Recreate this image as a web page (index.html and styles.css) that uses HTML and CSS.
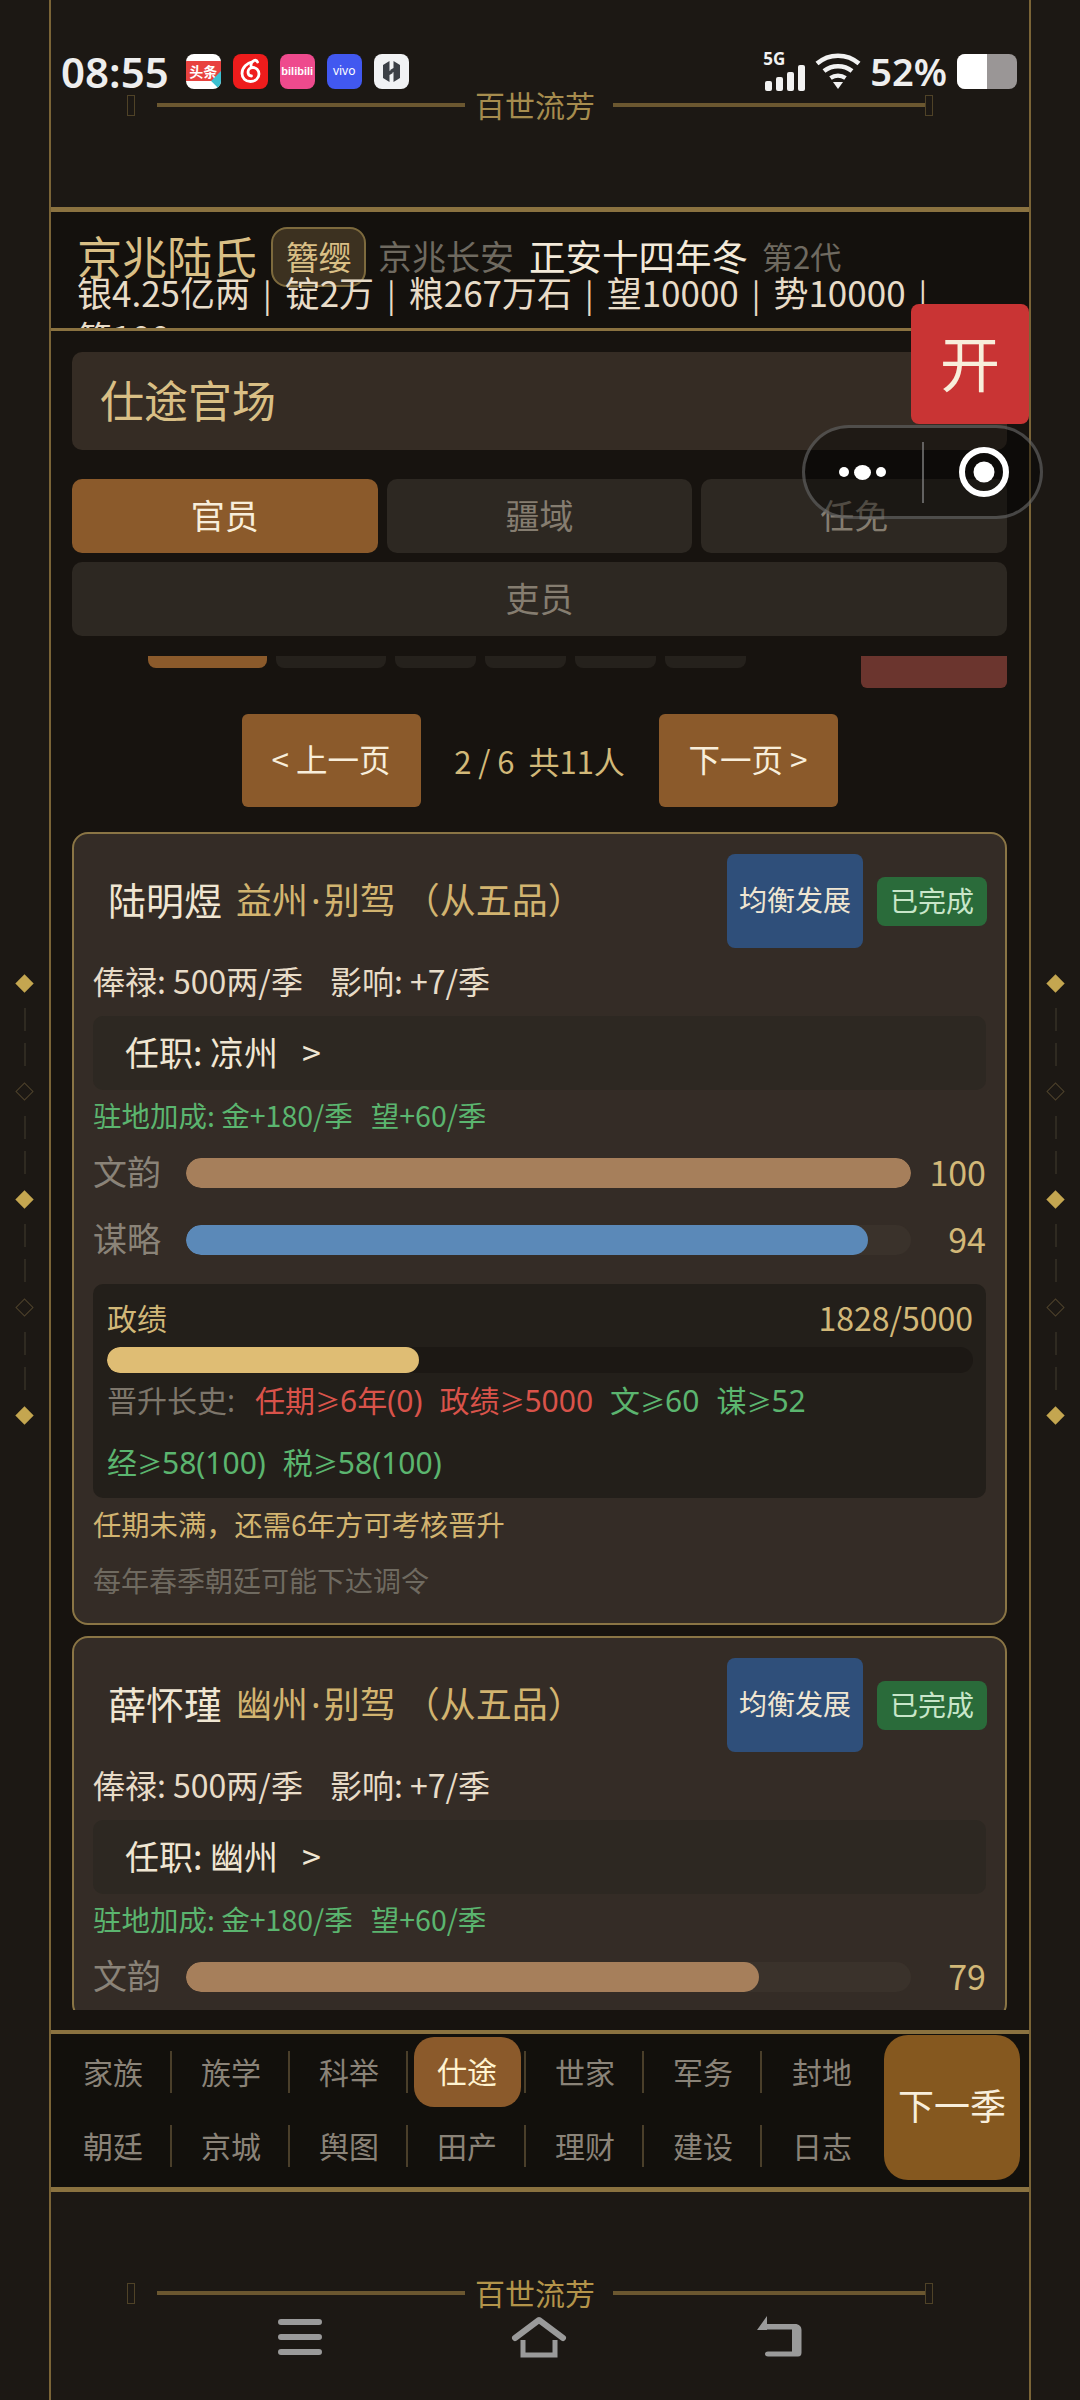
FILE: index.html
```html
<!DOCTYPE html>
<html lang="zh-CN">
<head>
    <meta charset="UTF-8">
    <meta name="viewport" content="width=device-width, initial-scale=1.0">
    <title>百世流芳</title>
    <link rel="stylesheet" href="styles.css">
</head>
<body>
<div class="page">
    <div class="gutter">
        <i class="gem"></i><i class="dash"></i><i class="dash"></i>
        <i class="gem hollow"></i><i class="dash"></i><i class="dash"></i>
        <i class="gem"></i><i class="dash"></i><i class="dash"></i>
        <i class="gem hollow"></i><i class="dash"></i><i class="dash"></i>
        <i class="gem"></i>
    </div>

    <div class="frame">
        <div class="top-space">
            <div class="motto"><i class="post"></i><i class="rule first"></i><span>百世流芳</span><i class="rule last"></i><i class="post"></i></div>
        </div>

        <header class="family">
            <div class="family-row">
                <span class="family-name">京兆陆氏</span>
                <span class="family-rank">簪缨</span>
                <span class="family-place">京兆长安</span>
                <span class="family-date">正安十四年冬</span>
                <span class="family-gen">第2代</span>
            </div>
            <div class="family-stats">
                银4.25亿两<i class="sep">|</i>锭2万<i class="sep">|</i>粮267万石<i class="sep">|</i>望10000<i class="sep">|</i>势10000<i class="sep">|</i><br>筹100
            </div>
        </header>

        <main class="content">
            <div class="page-title">仕途官场</div>
            <div class="tabs">
                <div class="tab active">官员</div>
                <div class="tab">疆域</div>
                <div class="tab">任免</div>
                <div class="tab wide">吏员</div>
            </div>

            <div class="scroller">
                <div class="filters">
                    <i class="chip on"></i><i class="chip w110"></i><i class="chip"></i><i class="chip"></i><i class="chip"></i><i class="chip"></i>
                    <i class="chip-red"></i>
                </div>

                <div class="pager">
                    <div class="pager-btn">&lt; 上一页</div>
                    <div class="pager-info">2 / 6&nbsp;&nbsp;共11人</div>
                    <div class="pager-btn">下一页 &gt;</div>
                </div>

                <section class="card">
                    <div class="card-head">
                        <span class="person">陆明煜</span>
                        <span class="post-name">益州<span class="dot">·</span>别驾<span class="post-grade">（从五品）</span></span>
                        <span class="badge-blue">均衡发展</span>
                        <span class="badge-green">已完成</span>
                    </div>
                    <div class="pay"><span>俸禄: 500两/季</span><span>影响: +7/季</span></div>
                    <div class="assign"><span>任职: 凉州</span><span class="assign-arrow">&gt;</span></div>
                    <div class="bonus"><span>驻地加成: 金+180/季</span><span>望+60/季</span></div>
                    <div class="stat first">
                        <span class="stat-label">文韵</span>
                        <div class="bar"><div class="bar-fill tan" style="width: 100%"></div></div>
                        <span class="stat-num">100</span>
                    </div>
                    <div class="stat">
                        <span class="stat-label">谋略</span>
                        <div class="bar"><div class="bar-fill blue" style="width: 94%"></div></div>
                        <span class="stat-num">94</span>
                    </div>
                    <div class="merit">
                        <div class="merit-head"><span>政绩</span><span class="merit-num">1828/5000</span></div>
                        <div class="merit-bar"><div class="merit-fill" style="width: 36%"></div></div>
                        <div class="reqs">
                            <span class="req-label">晋升长史:</span>
                            <span class="bad">任期<span class="ge">≥</span>6年(0)</span>
                            <span class="bad">政绩<span class="ge">≥</span>5000</span>
                            <span class="good">文<span class="ge">≥</span>60</span>
                            <span class="good">谋<span class="ge">≥</span>52</span>
                            <span class="good">经<span class="ge">≥</span>58(100)</span>
                            <span class="good">税<span class="ge">≥</span>58(100)</span>
                        </div>
                    </div>
                    <div class="note">任期未满，还需6年方可考核晋升</div>
                    <div class="tip">每年春季朝廷可能下达调令</div>
                </section>

                <section class="card">
                    <div class="card-head">
                        <span class="person">薛怀瑾</span>
                        <span class="post-name">幽州<span class="dot">·</span>别驾<span class="post-grade">（从五品）</span></span>
                        <span class="badge-blue">均衡发展</span>
                        <span class="badge-green">已完成</span>
                    </div>
                    <div class="pay"><span>俸禄: 500两/季</span><span>影响: +7/季</span></div>
                    <div class="assign"><span>任职: 幽州</span><span class="assign-arrow">&gt;</span></div>
                    <div class="bonus"><span>驻地加成: 金+180/季</span><span>望+60/季</span></div>
                    <div class="stat first">
                        <span class="stat-label">文韵</span>
                        <div class="bar"><div class="bar-fill tan" style="width: 79%"></div></div>
                        <span class="stat-num">79</span>
                    </div>
                </section>
            </div>
        </main>

        <nav class="nav">
            <div class="nav-grid">
                <div class="nav-item"><span>家族</span></div>
                <div class="nav-item"><span>族学</span></div>
                <div class="nav-item"><span>科举</span></div>
                <div class="nav-item current"><span>仕途</span></div>
                <div class="nav-item"><span>世家</span></div>
                <div class="nav-item"><span>军务</span></div>
                <div class="nav-item end"><span>封地</span></div>
                <div class="nav-item"><span>朝廷</span></div>
                <div class="nav-item"><span>京城</span></div>
                <div class="nav-item"><span>舆图</span></div>
                <div class="nav-item"><span>田产</span></div>
                <div class="nav-item"><span>理财</span></div>
                <div class="nav-item"><span>建设</span></div>
                <div class="nav-item end"><span>日志</span></div>
            </div>
            <div class="next-season">下一季</div>
        </nav>

        <div class="bottom-space">
            <div class="motto bright"><i class="post"></i><i class="rule first"></i><span>百世流芳</span><i class="rule last"></i><i class="post"></i></div>
        </div>
    </div>

    <div class="gutter">
        <i class="gem"></i><i class="dash"></i><i class="dash"></i>
        <i class="gem hollow"></i><i class="dash"></i><i class="dash"></i>
        <i class="gem"></i><i class="dash"></i><i class="dash"></i>
        <i class="gem hollow"></i><i class="dash"></i><i class="dash"></i>
        <i class="gem"></i>
    </div>

    <!-- system status bar, lies over the page -->
    <div class="status">
        <span class="clock">08:55</span>
        <div class="apps">
            <div class="app toutiao"><span class="tt-band">头条</span><i class="tt-corner"></i></div>
            <div class="app netease">
                <svg width="35" height="35" viewBox="0 0 35 35"><path d="M20 7.500c-6 1.500-11 6-11 12 0 4.500 3.500 8 8.500 8s8.500-3.500 8.500-7.500-3-6.500-6-6.500-5 2-5 4.500 1.500 4 3.500 4M18.500 13.500c-1-2-.5-6 2.500-7 1.500-.5 3 .2 3.500 1.500" fill="none" stroke="#fff" stroke-width="2.800" stroke-linecap="round"/></svg>
            </div>
            <div class="app bili">bilibili</div>
            <div class="app vivo">vivo</div>
            <div class="app hex">
                <svg width="35" height="35" viewBox="0 0 35 35"><path d="M15.500 7 9 11v13l6.500 4v-7l3-1.700v-4l-3 1.700zM19.500 28l6.500-4V11l-6.500-4v7l-3 1.700v4l3-1.700z" fill="#3c4046"/></svg>
            </div>
        </div>
        <div class="sys">
            <div class="signal">
                <span class="five-g">5G</span>
                <div class="signal-bars"><i class="s1"></i><i class="s2"></i><i class="s3"></i><i class="s4"></i></div>
            </div>
            <svg class="wifi" width="46" height="36" viewBox="0 0 46 36"><path d="M2 10.500c12-10.500 30-10.500 42 0M9 18c8-6.500 20-6.500 28 0M15.500 25c4.500-3 10.500-3 15 0" fill="none" stroke="#f2f2f2" stroke-width="4.500"/><path d="M18 29h10l-5 7z" fill="#f2f2f2"/></svg>
            <span class="percent">52%</span>
            <div class="battery"><div class="battery-level"></div></div>
        </div>
    </div>

    <div class="float-open">开</div>

    <div class="capsule">
        <div class="capsule-dots"><i></i><i class="mid"></i><i></i></div>
        <i class="capsule-sep"></i>
        <svg width="50" height="50" viewBox="0 0 50 50"><circle cx="25" cy="25" r="22" fill="none" stroke="#fff" stroke-width="6"/><circle cx="25" cy="25" r="10.500" fill="#fff"/></svg>
    </div>

    <!-- android buttons, drawn on top of the bottom strip -->
    <div class="sys-nav">
        <svg width="44" height="42" viewBox="0 0 44 42"><path d="M3 6h38M3 21h38M3 36h38" stroke="#9a9a9a" stroke-width="6" stroke-linecap="round"/></svg>
        <svg width="56" height="42" viewBox="0 0 56 42"><path d="M4 22 28 4l24 18" fill="none" stroke="#9a9a9a" stroke-width="6" stroke-linecap="round" stroke-linejoin="round"/><path d="M12 24v15h32V24" fill="none" stroke="#9a9a9a" stroke-width="5"/></svg>
        <svg width="48" height="42" viewBox="0 0 48 42"><path d="M1 14 11 0v8h28c4 0 6.500 2.500 6.500 6v22.500c0 2.500-1 4-3.500 4H12c-2 0-3-1-3-2.500s1-2.500 3-2.500h24V13.500H11V14z" fill="#9a9a9a"/></svg>
    </div>
</div>
</body>
</html>
```
FILE: styles.css
```css
* {
    box-sizing: border-box;
}
body {
    margin: 0;
    background-color: #1c1814;
    font-family: "Noto Sans CJK SC", "Noto Sans", sans-serif;
    color: #e8dcc8;
}
i {
    font-style: normal;
}
.page {
    position: relative;
    display: flex;
    width: 1080px;
    height: 2400px;
    overflow: hidden;
}

/* side ornaments */
.gutter {
    width: 49px;
    display: flex;
    flex-direction: column;
    align-items: center;
    justify-content: center;
    gap: 12px;
    padding-bottom: 2px;
}
.gem {
    width: 13px;
    height: 13px;
    margin: 6.5px 0;
    transform: rotate(45deg);
    background-color: #c4a650;
}
.gem.hollow {
    background: none;
    border: 1px solid #4d412b;
}
.dash {
    width: 2px;
    height: 23px;
    background-color: #2f2a21;
}

/* frame */
.frame {
    width: 982px;
    display: flex;
    flex-direction: column;
    border-left: 2px solid #7a6437;
    border-right: 2px solid #7a6437;
}
.top-space {
    height: 207px;
    padding-top: 90px;
}
.bottom-space {
    flex: 1;
    padding-top: 86px;
}
.motto {
    display: flex;
    align-items: center;
    margin: 0 97px 0 76px;
    height: 30px;
    font-size: 30px;
    line-height: 28px;
    white-space: nowrap;
    color: #a68c4e;
}
.motto span {
    height: 30px;
}
.motto.bright {
    color: #b3944a;
}
.post {
    flex: none;
    width: 8px;
    height: 21px;
    border: 1px solid #4f4227;
}
.rule {
    flex: none;
    height: 4px;
    background-color: #6b5730;
}
.rule.first {
    width: 308px;
    margin: 0 10px 0 22px;
}
.rule.last {
    width: 312px;
    margin-left: 18px;
}

/* family header */
.family {
    height: 124px;
    padding: 28px 24px 0 26px;
    border-top: 5px solid #8a7240;
    border-bottom: 3px solid #8a7240;
    background-color: #14110d;
    overflow: hidden;
}
.family-row {
    display: flex;
    align-items: center;
    height: 30px;
    white-space: nowrap;
}
.family-name {
    font-size: 45px;
    color: #d9bf85;
}
.family-rank {
    width: 95px;
    height: 60px;
    margin: 4px 12px 0 14px;
    border: 2px solid #7d6a3d;
    border-radius: 16px;
    background-color: #3c3120;
    font-size: 33px;
    line-height: 54px;
    text-align: center;
    color: #d9bf85;
}
.family-place {
    font-size: 34px;
    color: #6f6a60;
}
.family-date {
    margin-left: 15px;
    font-size: 36.5px;
    color: #f3ead9;
}
.family-gen {
    margin-left: 14px;
    font-size: 31px;
    color: #6f6a60;
}
.family-stats {
    font-size: 35px;
    line-height: 43px;
    color: #e8dcc8;
    white-space: nowrap;
}
.sep {
    margin: 0 13px;
    font-size: 32px;
}

/* main column */
.content {
    height: 1699px;
    padding: 21px 22px 20px 21px;
    background-color: #17130f;
    display: flex;
    flex-direction: column;
}
.page-title {
    flex: none;
    height: 98px;
    padding-left: 28px;
    border-radius: 10px;
    background-color: #352c24;
    font-size: 44px;
    line-height: 94px;
    color: #d9bf85;
}
.tabs {
    flex: none;
    display: grid;
    grid-template-columns: repeat(3, 1fr);
    gap: 9px;
    margin-top: 29px;
}
.tab {
    height: 74px;
    border-radius: 10px;
    background-color: #2d2822;
    font-size: 34px;
    line-height: 71px;
    text-align: center;
    color: #857d70;
}
.tab.active {
    background-color: #8b5a2b;
    color: #f8eedb;
}
.tab.wide {
    grid-column: 1 / 4;
}
.scroller {
    flex: 1;
    min-height: 0;
    margin-top: 20px;
    overflow: hidden;
}

/* filter row, scrolled mostly out of view */
.filters {
    display: flex;
    align-items: flex-start;
    gap: 9px;
    height: 32px;
    padding-left: 76px;
}
.chip {
    width: 81px;
    height: 12px;
    border-radius: 0 0 8px 8px;
    background-color: #25211c;
}
.chip.on {
    width: 119px;
    background-color: #8b5a2b;
}
.chip.w110 {
    width: 110px;
}
.chip-red {
    width: 146px;
    height: 32px;
    margin-left: auto;
    border-radius: 0 0 6px 6px;
    background-color: #6b352e;
}

.pager {
    display: flex;
    align-items: center;
    justify-content: center;
    margin-top: 26px;
}
.pager-btn {
    width: 179px;
    height: 93px;
    border-radius: 6px;
    background-color: #8b5a2b;
    font-size: 31.5px;
    line-height: 89px;
    text-align: center;
    color: #f8eedb;
}
.pager-info {
    width: 238px;
    font-size: 31px;
    text-align: center;
    color: #d2b878;
}

/* officer card */
.card {
    margin-top: 25px;
    padding: 20px 19px 19px;
    border: 2px solid #8a7545;
    border-radius: 16px;
    background-color: #342c26;
}
.card + .card {
    margin-top: 11px;
}
.card-head {
    display: flex;
    align-items: center;
    height: 94px;
    padding-left: 15px;
}
.person {
    margin-bottom: 5px;
    font-size: 38px;
    color: #f0e6d2;
}
.post-name {
    flex: 1;
    margin-bottom: 5px;
    margin-left: 14px;
    font-size: 36px;
    white-space: nowrap;
    color: #d2b470;
}
.dot {
    margin: 0 3px;
    font-family: "Noto Sans", sans-serif;
}
.post-grade {
    margin-left: 8px;
}
.badge-blue {
    width: 136px;
    height: 94px;
    border-radius: 8px;
    background-color: #2f4f7a;
    font-size: 28px;
    line-height: 90px;
    text-align: center;
    color: #f0e6d2;
}
.badge-green {
    width: 110px;
    height: 49px;
    margin-left: 14px;
    margin-right: -1px;
    border-radius: 8px;
    background-color: #2a6b3a;
    font-size: 28px;
    line-height: 46px;
    text-align: center;
    color: #c8e6c9;
}
.pay {
    display: flex;
    gap: 27px;
    height: 44px;
    margin-top: 12px;
    font-size: 32px;
    line-height: 40px;
    color: #e8dcc8;
}
.assign {
    height: 74px;
    margin-top: 12px;
    padding-left: 32px;
    border-radius: 10px;
    background-color: #2d2822;
    font-size: 34px;
    line-height: 72px;
    color: #f0e6d2;
}
.assign-arrow {
    margin-left: 24px;
}
.bonus {
    display: flex;
    gap: 18px;
    height: 44px;
    margin-top: 5px;
    font-size: 28.5px;
    line-height: 40px;
    color: #5bb56f;
}
.stat {
    display: flex;
    align-items: center;
    height: 44px;
    margin-top: 23px;
}
.stat.first {
    margin-top: 12px;
}
.stat-label {
    flex: none;
    width: 93px;
    height: 44px;
    font-size: 34px;
    line-height: 40px;
    color: #8a8378;
}
.stat-num {
    flex: 1;
    height: 44px;
    font-size: 34px;
    line-height: 42px;
    text-align: right;
    color: #d2b878;
}
.bar {
    flex: none;
    width: 725px;
    height: 30px;
    border-radius: 15px;
    background-color: #3a322b;
    overflow: hidden;
}
.bar-fill {
    height: 100%;
    border-radius: 15px;
}
.bar-fill.tan {
    background-color: #a67f5b;
}
.bar-fill.blue {
    background-color: #5b89b8;
}

.merit {
    margin-top: 22px;
    padding: 14px 13px 1px 14px;
    border-radius: 10px;
    background-color: #231f1a;
}
.merit-head {
    display: flex;
    justify-content: space-between;
    height: 42px;
    font-size: 30px;
    line-height: 38px;
    color: #d2b878;
}
.merit-num {
    font-size: 32px;
}
.merit-bar {
    height: 26px;
    margin-top: 7px;
    border-radius: 13px;
    background-color: #1c1814;
    overflow: hidden;
}
.merit-fill {
    height: 100%;
    border-radius: 13px;
    background-color: #dfbd74;
}
.reqs {
    display: flex;
    flex-wrap: wrap;
    column-gap: 17px;
    font-family: "Noto Sans", "Noto Sans CJK SC", sans-serif;
    font-size: 30px;
}
.reqs > span {
    height: 62px;
    line-height: 56px;
}
.ge {
    font-size: 25px;
    line-height: 1;
}
.req-label {
    margin-right: 3px;
    color: #7d766b;
}
.bad {
    color: #d9534a;
}
.good {
    color: #5bb56f;
}
.note {
    height: 44px;
    margin-top: 5px;
    font-size: 28.3px;
    line-height: 41px;
    color: #d2b470;
}
.tip {
    height: 44px;
    margin-top: 13px;
    font-size: 28px;
    line-height: 41px;
    color: #6f6a60;
}

/* bottom menu */
.nav {
    display: flex;
    gap: 4px;
    height: 162px;
    padding: 1px 8px 0 3px;
    border-top: 4px solid #8a7240;
    border-bottom: 5px solid #8a7240;
    background-color: #12100c;
}
.nav-grid {
    display: grid;
    grid-template-columns: repeat(7, 118px);
    grid-auto-rows: 74px;
    width: 826px;
}
.nav-item {
    display: flex;
    align-items: center;
    justify-content: center;
    height: 42px;
    margin-top: 16px;
    padding-left: 2px;
    border-right: 2px solid #4a3f2a;
    font-size: 30px;
    color: #8a8378;
}
.nav-item span {
    margin-bottom: 3px;
}
.nav-item.end {
    border-right: none;
}
.nav-item.current span {
    width: 107px;
    height: 70px;
    margin-bottom: 0;
    border-radius: 20px;
    background-color: #8b5a2b;
    line-height: 66px;
    text-align: center;
    color: #fff3d0;
}
.next-season {
    width: 136px;
    height: 145px;
    border-radius: 24px;
    background-color: #85581f;
    font-size: 36px;
    line-height: 139px;
    text-align: center;
    color: #f8eedb;
}

/* status bar */
.status {
    position: absolute;
    top: 49px;
    left: 61px;
    width: 959px;
    height: 44px;
    display: flex;
    align-items: center;
}
.clock {
    font-family: "Noto Sans", sans-serif;
    font-size: 42px;
    font-weight: 600;
    color: #eeeeee;
}
.apps {
    display: flex;
    gap: 12px;
    margin-left: 17px;
}
.app {
    width: 35px;
    height: 35px;
    border-radius: 8px;
    overflow: hidden;
    text-align: center;
}
.toutiao {
    position: relative;
    padding-top: 7px;
    background-color: #fff;
}
.tt-band {
    display: block;
    height: 20px;
    background-color: #e8423f;
    font-size: 14px;
    font-weight: 700;
    line-height: 20px;
    color: #fff;
}
.tt-corner {
    position: absolute;
    right: -7px;
    bottom: 1px;
    width: 14px;
    height: 14px;
    transform: rotate(45deg);
    background-color: #3cc0d0;
}
.netease {
    background-color: #ee1c1c;
}
.bili {
    background-color: #ee4a8d;
    font-family: "Liberation Sans", sans-serif;
    font-size: 11px;
    font-weight: 700;
    line-height: 35px;
    color: #fff;
}
.vivo {
    background-color: #4158f0;
    font-family: "Noto Sans", sans-serif;
    font-size: 12px;
    line-height: 33px;
    color: #fff;
}
.hex {
    background-color: #f1f2f4;
}
.sys {
    display: flex;
    align-items: center;
    margin-left: auto;
}
.signal {
    position: relative;
    width: 42px;
    height: 40px;
}
.five-g {
    position: absolute;
    top: -1px;
    left: 0;
    font-family: "Noto Sans", sans-serif;
    font-size: 17px;
    font-weight: 700;
    line-height: 18px;
    color: #f2f2f2;
}
.signal-bars {
    position: absolute;
    right: 0;
    bottom: 0;
    display: flex;
    align-items: flex-end;
    gap: 4px;
}
.signal-bars i {
    width: 7px;
    border-radius: 2px;
    background-color: #f2f2f2;
}
.s1 { height: 10px; }
.s2 { height: 14px; }
.s3 { height: 19px; }
.s4 { height: 26px; }
.wifi {
    margin-left: 10px;
}
.percent {
    margin-left: 9px;
    font-family: "Noto Sans", sans-serif;
    font-size: 38px;
    font-weight: 600;
    color: #eeeeee;
}
.battery {
    width: 60px;
    height: 35px;
    margin-left: 10px;
    margin-right: 3px;
    border-radius: 8px;
    background-color: #9a9696;
    overflow: hidden;
}
.battery-level {
    width: 30px;
    height: 100%;
    background-color: #fff;
}

/* overlays */
.float-open {
    position: absolute;
    top: 304px;
    left: 911px;
    width: 118px;
    height: 120px;
    border-radius: 8px;
    background-color: #c93434;
    font-size: 60px;
    line-height: 114px;
    text-align: center;
    color: #f8eedb;
}
.capsule {
    position: absolute;
    top: 425px;
    left: 802px;
    width: 241px;
    height: 94px;
    display: flex;
    align-items: center;
    border: 3px solid rgba(130, 130, 130, 0.5);
    border-radius: 47px;
    background-color: rgba(0, 0, 0, 0.4);
}
.capsule-dots {
    display: flex;
    align-items: center;
    justify-content: center;
    gap: 5px;
    width: 115px;
}
.capsule-dots i {
    width: 10px;
    height: 10px;
    border-radius: 50%;
    background-color: #fff;
}
.capsule-dots i.mid {
    width: 17px;
    height: 15px;
}
.capsule-sep {
    width: 2px;
    height: 61px;
    margin-left: 2px;
    background-color: rgba(130, 130, 130, 0.7);
}
.capsule svg {
    margin-left: 35px;
}
.sys-nav {
    position: absolute;
    top: 2316px;
    left: 278px;
    width: 526px;
    display: flex;
    justify-content: space-between;
    align-items: flex-start;
}
```
